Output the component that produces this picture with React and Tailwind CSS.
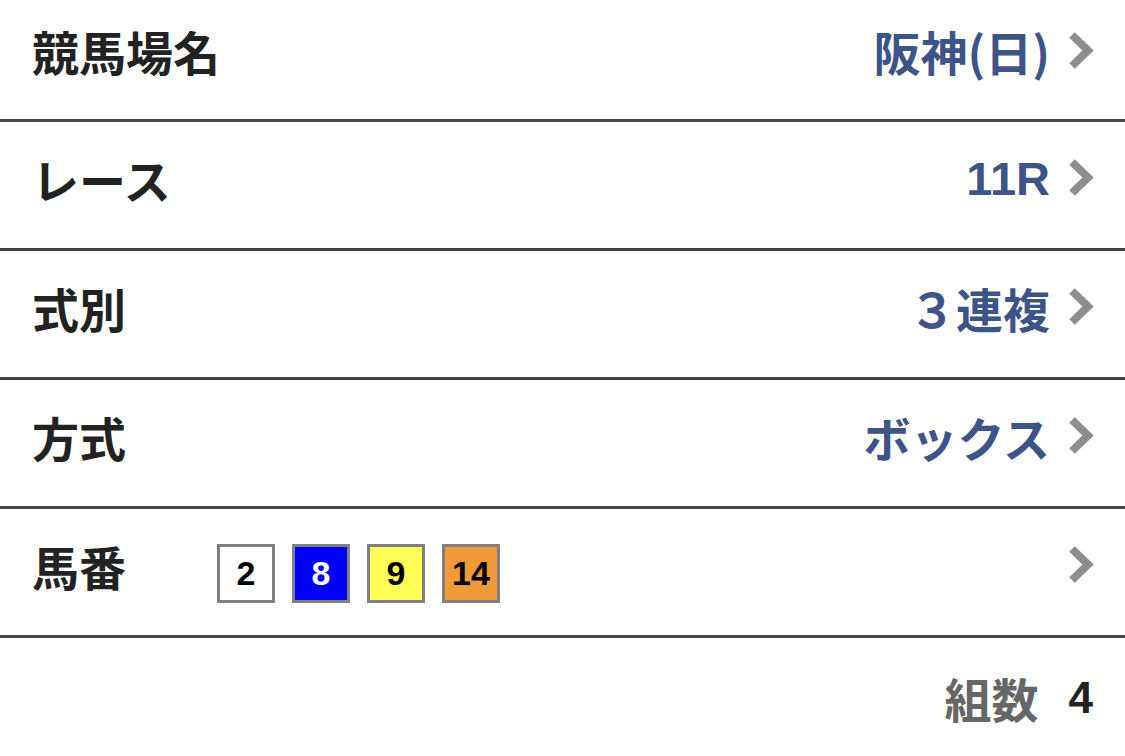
const JP = { fontFamily: '"Noto Sans CJK JP", "Noto Sans", sans-serif' };
const NUM = { fontFamily: '"Liberation Sans", Arial, sans-serif' };

function Chevron() {
  return (
    <svg width="27" height="38" viewBox="0 0 27 38" className="shrink-0">
      <polyline
        points="4,3 20,18.5 4,34"
        fill="none"
        stroke="#8e8e8e"
        strokeWidth="8"
        strokeLinecap="butt"
        strokeLinejoin="miter"
      />
    </svg>
  );
}

function Row({ label, value, first, children }) {
  return (
    <div
      className={`flex items-center justify-between border-b-[3px] border-[#454545] pl-8 pr-[30px] ${
        first ? "h-[122px] pb-[18px]" : "h-[129px] pb-[14px]"
      }`}
    >
      <div className="flex items-center">
        <span className="text-[47px] font-bold text-[#222] leading-none" style={JP}>
          {label}
        </span>
        {children}
      </div>
      <div className="flex items-center gap-[18px]">
        {value}
        <Chevron />
      </div>
    </div>
  );
}

function Val({ children, num }) {
  return (
    <span className="text-[47px] font-bold text-[#3d5488] leading-none" style={num ? NUM : JP}>
      {children}
    </span>
  );
}

const horses = [
  { n: "2", bg: "bg-white", fg: "text-black" },
  { n: "8", bg: "bg-[#0000ff]", fg: "text-white" },
  { n: "9", bg: "bg-[#ffff55]", fg: "text-black" },
  { n: "14", bg: "bg-[#f09a3a]", fg: "text-black" },
];

export default function App() {
  return (
    <div className="w-[1125px] h-[756px] bg-white overflow-hidden">
      <Row first label="競馬場名" value={<Val>阪神(日)</Val>} />
      <Row label="レース" value={<Val num>11R</Val>} />
      <Row label="式別" value={<Val>３連複</Val>} />
      <Row label="方式" value={<Val>ボックス</Val>} />
      <Row label="馬番" value={null}>
        <div className="ml-[91px] flex gap-[17px] mt-[16px]">
          {horses.map((h) => (
            <div
              key={h.n}
              className={`w-[58px] h-[59px] border-[3px] border-[#808080] flex items-center justify-center ${h.bg} ${h.fg} text-[34px] font-bold`}
              style={NUM}
            >
              {h.n}
            </div>
          ))}
        </div>
      </Row>
      <div className="flex items-center justify-end h-[117px] pr-[32px] pt-[2px]">
        <span className="text-[47px] font-bold text-[#666] leading-none" style={JP}>
          組数
        </span>
        <span className="ml-[30px] text-[44px] font-bold text-[#222] leading-none" style={NUM}>
          4
        </span>
      </div>
    </div>
  );
}
